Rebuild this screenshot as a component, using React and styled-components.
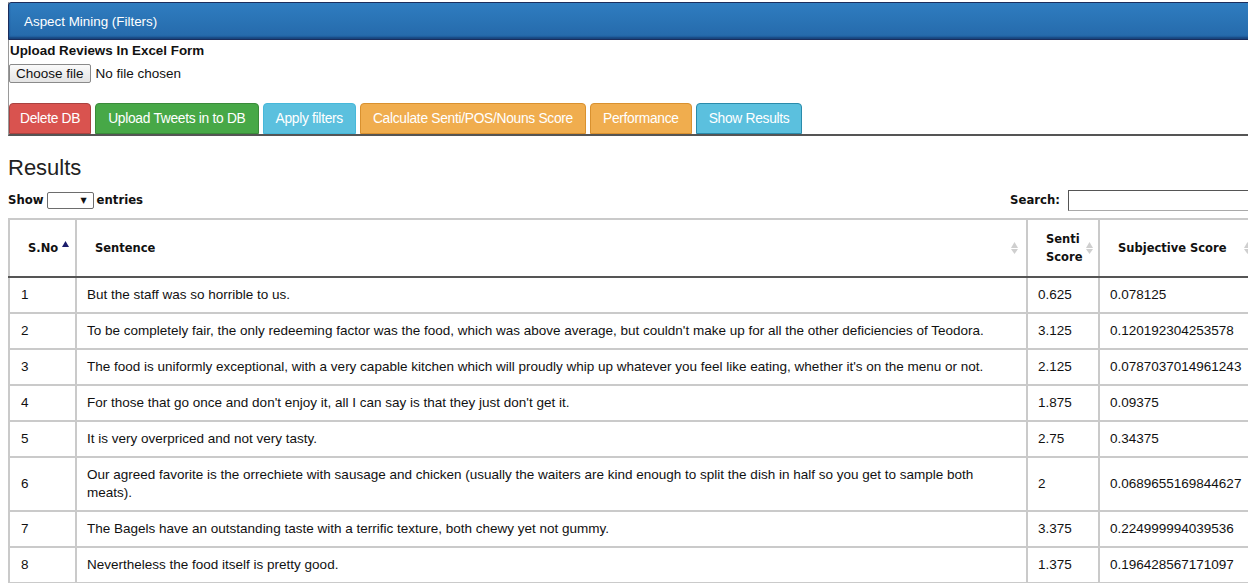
import React from 'react';
import styled, { createGlobalStyle } from 'styled-components';

const GlobalStyle = createGlobalStyle`
body {
	margin: 0;
	padding: 2px 0 0 8px;
	overflow: hidden;
	background: #fff;
	font-family: 'Liberation Sans', Arial, sans-serif;
	color: #111;
}
`;

const Page = styled.div`
width: 1262px;
`;

const Panel = styled.div`
border-left: 1px solid #9a9a9a;
border-bottom: 2px solid #555;
`;

const PanelHeading = styled.div`
height: 36px;
display: flex;
align-items: center;
padding-left: 15px;
background: linear-gradient(#2f7dc0, #2569aa);
border: 1px solid #1b2d5c;
border-radius: 3px 3px 0 0;
box-shadow: inset 0 -2px 2px rgba(10, 30, 80, 0.5);
color: #fff;
font-size: 13.4px;
margin-left: -1px;
`;

const PanelBody = styled.div`
padding-top: 3px;
`;

const UploadLabel = styled.div`
padding-left: 1px;
font-size: 13.4px;
font-weight: bold;
line-height: 16px;
`;

const FileRow = styled.div`
display: flex;
align-items: center;
gap: 5px;
margin-top: 5px;
font-size: 13.5px;
`;

const FileButton = styled.span`
display: inline-block;
height: 19px;
line-height: 17px;
padding: 0 6px;
border: 1px solid #8a8a8a;
border-radius: 2px;
background: linear-gradient(#fafafa, #e4e4e4);
box-sizing: border-box;
`;

const ButtonRow = styled.div`
display: flex;
gap: 4px;
margin-top: 20px;
`;

const palette = {
	danger: ['#d9534f', '#a94240'],
	success: ['#47a847', '#3a8b3a'],
	info: ['#5bc0de', '#46b8da'],
	warning: ['#f0ad4e', '#d9912f'],
	infoDark: ['#5bc0de', '#2a8bab'],
};

const ActionButton = styled.button`
height: 31px;
padding: 0 ${(p) => (p.compact ? 10 : 12)}px;
border: 1px solid ${(p) => palette[p.kind][1]};
border-radius: 4px 4px 0 0;
background: ${(p) => palette[p.kind][0]};
color: #fff;
font-family: 'Liberation Sans', Arial, sans-serif;
font-size: 13.8px;
letter-spacing: -0.3px;
cursor: pointer;
`;

const Title = styled.h2`
margin: 19px 0 0;
font-size: 22px;
font-weight: normal;
line-height: 26px;
color: #222;
`;

const Controls = styled.div`
display: flex;
justify-content: space-between;
align-items: center;
margin-top: 8px;
height: 22px;
font-family: 'DejaVu Sans', Verdana, sans-serif;
font-size: 11.7px;
font-weight: bold;
`;

const LengthControl = styled.label`
display: flex;
align-items: center;
gap: 3px;
`;

const FakeSelect = styled.span`
display: inline-flex;
align-items: center;
justify-content: flex-end;
width: 47px;
height: 17px;
padding-right: 6px;
box-sizing: border-box;
border: 1px solid #6d6d6d;
border-radius: 2px;
font-size: 8px;
font-weight: normal;
`;

const SearchControl = styled.label`
display: flex;
align-items: center;
gap: 8px;
`;

const SearchInput = styled.input`
width: 202px;
height: 21px;
box-sizing: border-box;
border: 1px solid #a9a9a9;
border-top-color: #555;
border-left-color: #555;
`;

const Table = styled.table`
margin-top: 7px;
width: 1251px;
table-layout: fixed;
border-collapse: collapse;
border: 2px solid #cacaca;
font-size: 13.5px;
color: #111;
`;

const HeadCell = styled.th`
padding: 10px 8px 10px 18px;
border: 2px solid #cacaca;
border-bottom: 2px solid #555;
font-family: 'DejaVu Sans', Verdana, sans-serif;
font-size: 11.5px;
font-weight: bold;
line-height: 18px;
text-align: left;
`;

const HeadInner = styled.div`
display: flex;
align-items: center;
justify-content: space-between;
gap: 4px;
`;

const Cell = styled.td`
padding: 8px 10px;
border: 2px solid #cacaca;
line-height: 18px;
vertical-align: middle;
`;

const NumCell = styled(Cell)`
padding-left: 11px;
`;

const SortIcon = ({ asc }) => (
	<svg width="7" height="12" viewBox="0 0 7 12" style={{ flexShrink: 0, alignSelf: asc ? 'flex-start' : 'center', marginTop: asc ? 2 : 0 }}>
		<path d="M3.5 0 L7 6 L0 6 Z" fill={asc ? '#1b1c6b' : '#cfcfcf'} />
		{!asc && <path d="M3.5 12 L7 7 L0 7 Z" fill="#cfcfcf" />}
	</svg>
);

const rows = [
	['1', 'But the staff was so horrible to us.', '0.625', '0.078125'],
	['2', "To be completely fair, the only redeeming factor was the food, which was above average, but couldn't make up for all the other deficiencies of Teodora.", '3.125', '0.120192304253578'],
	['3', "The food is uniformly exceptional, with a very capable kitchen which will proudly whip up whatever you feel like eating, whether it's on the menu or not.", '2.125', '0.0787037014961243'],
	['4', "For those that go once and don't enjoy it, all I can say is that they just don't get it.", '1.875', '0.09375'],
	['5', 'It is very overpriced and not very tasty.', '2.75', '0.34375'],
	['6', 'Our agreed favorite is the orrechiete with sausage and chicken (usually the waiters are kind enough to split the dish in half so you get to sample both meats).', '2', '0.0689655169844627'],
	['7', 'The Bagels have an outstanding taste with a terrific texture, both chewy yet not gummy.', '3.375', '0.224999994039536'],
	['8', 'Nevertheless the food itself is pretty good.', '1.375', '0.196428567171097'],
];

const App = () => (
	<Page>
		<GlobalStyle />
		<Panel>
			<PanelHeading>Aspect Mining (Filters)</PanelHeading>
			<PanelBody>
				<UploadLabel>Upload Reviews In Excel Form</UploadLabel>
				<FileRow>
					<FileButton>Choose file</FileButton>
					<span>No file chosen</span>
				</FileRow>
				<ButtonRow>
					<ActionButton kind="danger" compact>Delete DB</ActionButton>
					<ActionButton kind="success">Upload Tweets in to DB</ActionButton>
					<ActionButton kind="info">Apply filters</ActionButton>
					<ActionButton kind="warning">Calculate Senti/POS/Nouns Score</ActionButton>
					<ActionButton kind="warning">Performance</ActionButton>
					<ActionButton kind="infoDark">Show Results</ActionButton>
				</ButtonRow>
			</PanelBody>
		</Panel>

		<Title>Results</Title>
		<Controls>
			<LengthControl>
				Show
				<FakeSelect>▼</FakeSelect>
				entries
			</LengthControl>
			<SearchControl>
				Search:
				<SearchInput type="search" />
			</SearchControl>
		</Controls>

		<Table>
			<colgroup>
				<col style={{ width: 67 }} />
				<col style={{ width: 951 }} />
				<col style={{ width: 72 }} />
				<col style={{ width: 161 }} />
			</colgroup>
			<thead>
				<tr>
					<HeadCell><HeadInner><span>S.No</span><SortIcon asc /></HeadInner></HeadCell>
					<HeadCell><HeadInner><span>Sentence</span><SortIcon /></HeadInner></HeadCell>
					<HeadCell><HeadInner><span>Senti Score</span><SortIcon /></HeadInner></HeadCell>
					<HeadCell><HeadInner><span>Subjective Score</span><SortIcon /></HeadInner></HeadCell>
				</tr>
			</thead>
			<tbody>
				{rows.map(([no, sentence, senti, subjective]) => (
					<tr key={no}>
						<NumCell>{no}</NumCell>
						<Cell>{sentence}</Cell>
						<Cell>{senti}</Cell>
						<Cell>{subjective}</Cell>
					</tr>
				))}
			</tbody>
		</Table>
	</Page>
);

export default App;
